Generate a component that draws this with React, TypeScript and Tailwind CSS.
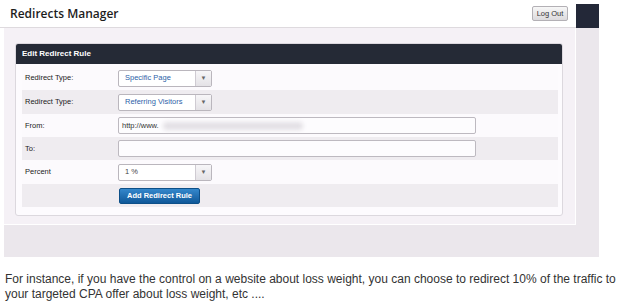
function SelectBox({ value, blue = true }: { value: string; blue?: boolean }) {
  return (
    <div className="flex h-[17px] w-[94px] rounded-[2px] border border-[#bab6bd] bg-white">
      <div
        className={`flex flex-1 items-center pl-[6px] text-[7.5px] ${
          blue ? "text-[#2d5fa8]" : "text-[#444]"
        }`}
      >
        {value}
      </div>
      <div className="flex w-[16px] items-center justify-center border-l border-[#cfcbd2] bg-gradient-to-b from-[#f7f6f8] to-[#e4e2e6]">
        <span className="text-[6px] leading-none text-[#666]">▼</span>
      </div>
    </div>
  );
}

function Row({
  label,
  gray,
  h,
  children,
}: {
  label?: string;
  gray?: boolean;
  h: string;
  children: React.ReactNode;
}) {
  return (
    <div className={`flex items-center ${h} ${gray ? "bg-[#efecf0]" : "bg-[#fcfafd]"}`}>
      <div className="w-[96px] pl-[3px] text-[7.5px] text-[#222]">{label}</div>
      {children}
    </div>
  );
}

export default function App() {
  return (
    <div className="h-[306px] w-[622px] overflow-hidden bg-white font-['Liberation_Sans',Arial,sans-serif]">
      {/* top bar */}
      <div className="flex h-[28px]">
        <div className="flex w-[576px] items-center justify-between border-b border-[#dedade] pl-[10px] pr-[8px]">
          <h1 className="font-['Open_Sans',sans-serif] text-[12px] font-semibold text-[#1d1d1d]">Redirects Manager</h1>
          <button className="h-[15px] w-[36px] rounded-[2px] border border-[#b3b0b5] bg-gradient-to-b from-[#f7f7f7] to-[#dcdadd] text-[7.5px] text-[#333]">
            Log Out
          </button>
        </div>
        <div className="mt-[4px] h-[24px] w-[23px] bg-[#232838]" />
      </div>

      {/* main area */}
      <div className="ml-[4px] flex h-[229px] w-[595px] items-start bg-[#ebe7ec]">
        <div className="h-[197px] w-[572px] border-r border-b border-white bg-[#f5f1f6] pl-[11px] pt-[15px]">
          <div className="w-[548px] rounded-[3px] border border-[#dcd8de] bg-[#fdfbfe] pb-[8px]">
            <div className="flex h-[20px] items-center rounded-t-[2px] bg-[#252a36] pl-[6px] text-[8px] font-bold text-white">
              Edit Redirect Rule
            </div>
            <div className="pl-[6px] pr-[4px] pt-[2px]">
              <Row label="Redirect Type:" h="h-[24px]">
                <SelectBox value="Specific Page" />
              </Row>
              <Row label="Redirect Type:" gray h="h-[24px]">
                <SelectBox value="Referring Visitors" />
              </Row>
              <Row label="From:" h="h-[23px]">
                <div className="flex h-[17px] w-[358px] items-center rounded-[2px] border border-[#bdb9c0] bg-[#fdfcfe] pl-[3px] text-[7.5px] text-[#333]">
                  http://www.
                  <span className="ml-[4px] h-[8px] w-[140px] rounded-full bg-[#e3e0e5] blur-[2px]" />
                </div>
              </Row>
              <Row label="To:" gray h="h-[23px]">
                <div className="h-[17px] w-[358px] rounded-[2px] border border-[#bdb9c0] bg-[#fdfcfe]" />
              </Row>
              <Row label="Percent" h="h-[24px]">
                <SelectBox value="1 %" blue={false} />
              </Row>
              <Row gray h="h-[23px]">
                <button className="ml-[1px] h-[16px] w-[81px] rounded-[2px] border border-[#0d4f88] bg-gradient-to-b from-[#3488cc] to-[#0f5899] text-[7.5px] font-bold text-white">
                  Add Redirect Rule
                </button>
              </Row>
            </div>
          </div>
        </div>
      </div>

      <p className="mt-[15px] w-[617px] pl-[5px] text-[12px] leading-[15px] text-[#333]">
        For instance, if you have the control on a website about loss weight, you can choose to redirect 10% of the traffic to your targeted CPA offer about loss weight, etc ....
      </p>
    </div>
  );
}
